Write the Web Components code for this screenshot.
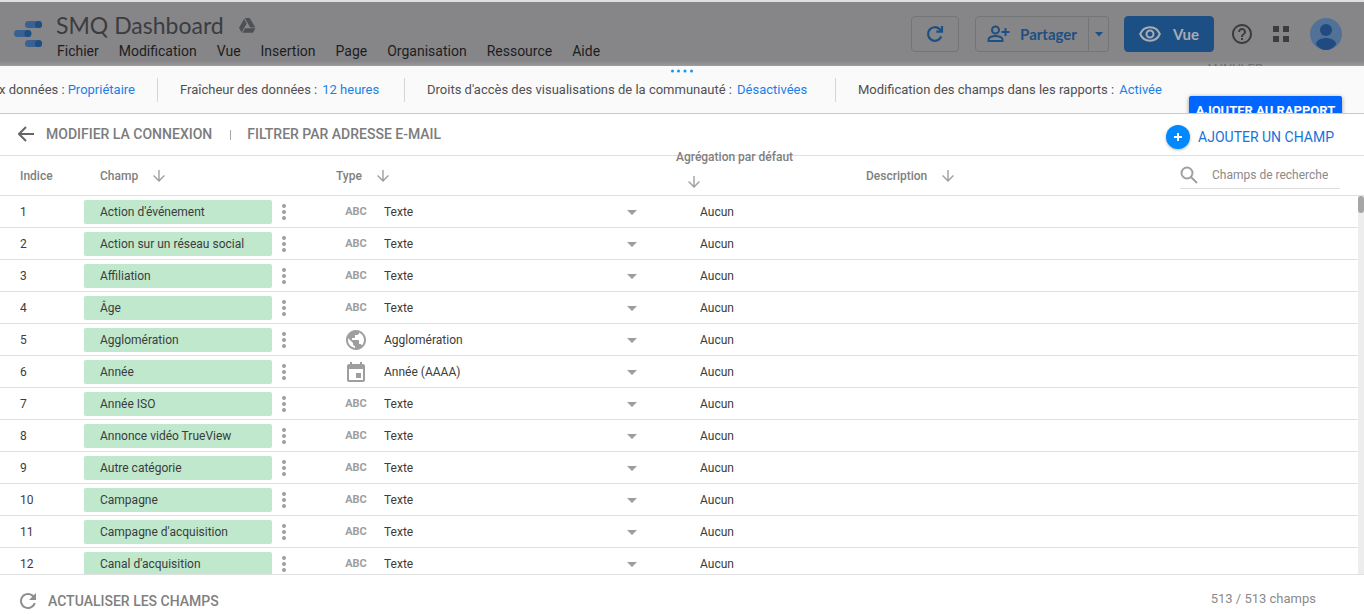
<!DOCTYPE html>
<html lang="fr">
<head>
<meta charset="utf-8">
<title>SMQ Dashboard</title>
<style>
html,body{margin:0;height:100%}
body{font-family:Roboto,"Liberation Sans",sans-serif;font-size:12px;color:#3c4043;background:#fff}
</style>
</head>
<body>
<studio-app></studio-app>

<template id="t-app">
<style>
:host{display:flex;flex-direction:column;height:100vh;overflow:hidden}
field-table{flex:1;min-height:0}
</style>
<top-bar></top-bar>
<source-bar></source-bar>
<panel-actions></panel-actions>
<field-table></field-table>
<panel-footer></panel-footer>
</template>

<template id="t-top">
<style>
:host{display:block;position:relative;flex:none;height:66px;box-sizing:border-box;overflow:hidden;background:#868688;border-top:2px solid #dcdfe3}
:host::after{content:"";position:absolute;left:0;right:0;bottom:0;height:5px;background:linear-gradient(#868688,#9c9c9c)}
.bar{display:flex;align-items:flex-start;height:64px;padding:0 22px 0 14px;box-sizing:border-box}
.logo{margin-top:19px;margin-right:13px}
.main{flex:1}
.title{display:flex;align-items:center;gap:15px;height:32px;margin-top:7px}
h1{margin:0;font:400 23px/32px Lato,sans-serif;color:#3b3c3f}
nav{display:flex;gap:20px;margin:2px 0 0 1px}
nav a{font-size:14px;line-height:16px;color:#1d1d1f;text-decoration:none}
.tools{display:flex;align-items:center;height:36px;margin-top:14px}
button{font:700 15px/34px Lato,sans-serif;display:flex;align-items:center;justify-content:center;height:36px;padding:0;margin:0;box-sizing:border-box;border:1px solid #747577;background:none;color:#1c4f84;border-radius:4px}
.re{width:48px;margin-right:16px}
.share{width:114px;gap:10px;border-radius:4px 0 0 4px}
.more{width:20px;border-left:0;border-radius:0 4px 4px 0;margin-right:15px}
.view{width:90px;gap:12px;background:#1c4f84;border-color:#1c4f84;color:#a9adb3;margin-right:18px}
.ico{border:0;background:none;color:#3b3c3f}
.help{margin-right:21px}
.apps{margin-right:21px}
.cancel{position:absolute;z-index:1;right:101px;top:60px;font-size:13px;line-height:13px;color:#717173}
</style>
<div class="bar">
<svg class="logo" width="29" height="27" viewBox="0 0 29 27"><g fill="#3a618f"><rect x="11" y="0" width="17" height="7" rx="3.500"/><rect x="0" y="9" width="17" height="7" rx="3.500"/><rect x="11" y="19" width="17" height="7" rx="3.500"/></g><g fill="#1c4f84"><circle cx="24.500" cy="3.500" r="3.500"/><circle cx="14" cy="12.500" r="3.500"/><circle cx="24.500" cy="22.500" r="3.500"/></g></svg>
<div class="main">
<div class="title"><h1>SMQ Dashboard</h1><svg width="17" height="15" viewBox="0 0 17 15" fill="#4f5053"><path d="M5.700 0h5l5.600 9.400h-5zM5 1l2.700 4.600L2.600 14.400 0 9.800zM6 10.300h10.500L14 14.800H3.500z"/></svg></div>
<nav><a href="#">Fichier</a><a href="#">Modification</a><a href="#">Vue</a><a href="#">Insertion</a><a href="#">Page</a><a href="#">Organisation</a><a href="#">Ressource</a><a href="#">Aide</a></nav>
</div>
<div class="tools">
<button class="re" aria-label="Actualiser"><svg width="18" height="18" viewBox="0 0 18 18" fill="none" stroke="#1c4f84" stroke-width="2.200"><path d="M15.200 11.500A6.800 6.800 0 1 1 13.500 4L16 6.500M16 1v5.700h-5.700"/></svg></button>
<button class="share"><svg width="23" height="18" viewBox="0 0 23 18" fill="none" stroke="#1c4f84" stroke-width="2"><circle cx="8.500" cy="5" r="3.500"/><path d="M1.500 16v-1.500c0-2.500 4.500-3.600 7-3.600s7 1.100 7 3.600V16zM18.500 3v8M14.500 7h8"/></svg>Partager</button>
<button class="more" aria-label="Plus d'options"><svg width="8" height="5" viewBox="0 0 8 5"><path d="M0 0h8L4 4.500z" fill="#1c4f84"/></svg></button>
<button class="view"><svg width="22" height="16" viewBox="0 0 22 16" fill="none" stroke="#a9adb3" stroke-width="2"><path d="M1.200 8C3 3.800 6.700 1.300 11 1.300S19 3.800 20.800 8C19 12.200 15.300 14.700 11 14.700S3 12.200 1.200 8z"/><circle cx="11" cy="8" r="3.500"/></svg>Vue</button>
<button class="ico help" aria-label="Aide"><svg width="20" height="20" viewBox="2 2 20 20" fill="#3b3c3f"><path d="M11 18h2v-2h-2v2zm1-16C6.480 2 2 6.480 2 12s4.480 10 10 10 10-4.480 10-10S17.520 2 12 2zm0 18c-4.410 0-8-3.590-8-8s3.590-8 8-8 8 3.590 8 8-3.590 8-8 8zm0-14c-2.210 0-4 1.790-4 4h2c0-1.100.9-2 2-2s2 .9 2 2c0 2-3 1.750-3 5h2c0-2.250 3-2.500 3-5 0-2.210-1.790-4-4-4z"/></svg></button>
<button class="ico apps" aria-label="Applications"><svg width="16" height="16" viewBox="0 0 16 16" fill="#3b3c3f"><path d="M0 0h6v6H0zM10 0h6v6h-6zM0 10h6v6H0zM10 10h6v6h-6z"/></svg></button>
<button class="ico" aria-label="Compte"><svg width="32" height="32" viewBox="0 0 32 32"><circle cx="16" cy="16" r="16" fill="#527199"/><circle cx="16" cy="12" r="6" fill="#204a80"/><path d="M6 26.500c0-4.500 6-6.500 10-6.500s10 2 10 6.500C23.500 30 20 32 16 32S8.500 30 6 26.500z" fill="#204a80"/></svg></button>
</div>
</div>
<span class="cancel">ANNULER</span>
</template>

<template id="t-source">
<style>
:host{display:flex;align-items:center;position:relative;flex:none;height:48px;box-sizing:border-box;overflow:hidden;background:#fafafa;border-bottom:1px solid #c9c9c9;font-size:13px;line-height:16px;color:#505052;white-space:nowrap}
div{height:24px;display:flex;align-items:center;gap:5px;padding:0 22px;border-right:1px solid #d6d6d6}
div:first-of-type{width:135px;padding-left:0;gap:3px;justify-content:flex-end}
.fresh{min-width:202px}
.rights{min-width:386px}
div:last-of-type{border:0}
a{color:#1a80e8;text-decoration:none}
.grip{position:absolute;left:50%;top:3px;transform:translateX(-11px)}
.add{position:absolute;right:22px;top:30px;width:153px;height:30px;padding:0;border:0;border-radius:2px;background:#0066ff;color:#fff;font:700 13px/30px Roboto,sans-serif;box-shadow:0 1px 4px rgba(0,0,0,.4)}
</style>
<svg class="grip" width="23" height="4" viewBox="0 0 23 4" fill="#1295f5"><circle cx="1.500" cy="2" r="1.500"/><circle cx="7.500" cy="2" r="1.500"/><circle cx="14" cy="2" r="1.500"/><circle cx="20.500" cy="2" r="1.500"/></svg>
<div><span>x données :</span><a href="#">Propriétaire</a></div>
<div class="fresh"><span>Fraîcheur des données :</span><a href="#">12 heures</a></div>
<div class="rights"><span>Droits d'accès des visualisations de la communauté :</span><a href="#">Désactivées</a></div>
<div><span>Modification des champs dans les rapports :</span><a href="#">Activée</a></div>
<button class="add">AJOUTER AU RAPPORT</button>
</template>

<template id="t-actions">
<style>
:host{display:flex;align-items:center;flex:none;height:42px;box-sizing:border-box;padding:0 30px 2px 18px;border-bottom:1px solid #e0e0e0}
button{font:500 14px/20px Roboto,sans-serif;border:0;background:none;padding:0;color:#7c7c7c;display:flex;align-items:center}
.back{gap:12px}
i{width:1px;height:10px;background:#a8a8a8;margin:2px 16px 0 18px}
.new{margin-left:auto;gap:8px;font-weight:400;color:#1a73d8;margin-top:6px}
b{display:flex;align-items:center;justify-content:center;width:24px;height:24px;border-radius:50%;background:#0088ff;box-shadow:0 1px 3px rgba(0,0,0,.3)}
</style>
<button class="back"><svg width="16" height="16" viewBox="0 0 16 16" fill="none" stroke="#666" stroke-width="2"><path d="M16 8H1.500M8 1L1 8l7 7"/></svg>MODIFIER LA CONNEXION</button><i></i><button>FILTRER PAR ADRESSE E-MAIL</button>
<button class="new"><b><svg width="8" height="8" viewBox="0 0 8 8"><path d="M4 0v8M0 4h8" stroke="#fff" stroke-width="2"/></svg></b>AJOUTER UN CHAMP</button>
</template>

<template id="t-table">
<style>
:host{display:block;position:relative}
table{width:100%;table-layout:fixed;border-collapse:separate;border-spacing:0}
th,td{padding:0;text-align:left;vertical-align:top;border-bottom:1px solid #e0e0e0;font-size:12px}
th{height:39px;font-weight:500;color:#808080}
td{height:31px;color:#3c3c3c}
.c1{width:84px}.c2{width:252px}.c3{width:340px}.c4{width:190px}
.h{display:flex;align-items:center;gap:15px;height:39px}
th:nth-child(2) .h{padding-left:16px}
.ix{padding-left:20px}
.two{flex-direction:column;align-items:flex-start;justify-content:center;gap:0;height:28px;line-height:24px;white-space:nowrap}
.two sort-arrow{flex:none;height:26px;display:flex;align-items:center;padding-left:12px}
.last{justify-content:space-between}
label{display:flex;align-items:center;gap:14px;width:160px;height:27px;margin:0 24px 0 0;border-bottom:1px solid #ddd;box-sizing:border-box}
input{flex:1;min-width:0;border:0;padding:0;outline:0;background:none;font:400 12px/16px Roboto,sans-serif;color:#666}
input::placeholder{color:#8a8a8a;opacity:1}
.f,.t,.n{display:flex;align-items:center;height:32px;margin-bottom:-1px}
.pill{width:188px;height:24px;box-sizing:border-box;padding-left:16px;border-radius:2px;background:#bfe8cc;line-height:24px}
.dots{margin-left:10px;width:4px;height:16px;border:0;background:none;padding:0;display:flex}
type-icon{width:24px;margin-left:8px}
select{appearance:none;border:0;background:none;padding:0;margin:0 3px 0 16px;width:240px;font:400 12px/16px Roboto,sans-serif;color:#3c3c3c}
.agg{padding-left:24px}
.track{position:absolute;right:0;top:40px;bottom:0;width:6px;background:#ededed}
.thumb{height:17px;border-radius:3px;background:#a6a6a6}
</style>
<table>
<colgroup><col class="c1"><col class="c2"><col class="c3"><col class="c4"><col></colgroup>
<thead><tr>
<th><div class="h ix">Indice</div></th>
<th><div class="h">Champ<sort-arrow></sort-arrow></div></th>
<th><div class="h">Type<sort-arrow></sort-arrow></div></th>
<th><div class="h two">Agrégation par défaut<sort-arrow></sort-arrow></div></th>
<th><div class="h last"><div class="h">Description<sort-arrow></sort-arrow></div>
<label><svg width="18" height="18" viewBox="0 0 18 18" fill="none" stroke="#a0a0a0" stroke-width="2"><circle cx="7" cy="7" r="5.500"/><path d="M11 11l6 6"/></svg><input type="search" placeholder="Champs de recherche" aria-label="Champs de recherche"></label></div></th>
</tr></thead>
<tbody></tbody>
</table>
<div class="track"><div class="thumb"></div></div>
</template>

<template id="t-arrow">
<style>:host{display:inline-flex}</style>
<svg width="12" height="12" viewBox="0 0 12 12" fill="none" stroke="#a0a0a0" stroke-width="1.400"><path d="M6 0v11M.6 5.600L6 11l5.400-5.400"/></svg>
</template>

<template id="t-footer">
<style>
:host{display:flex;align-items:center;justify-content:space-between;position:relative;z-index:1;flex:none;height:40px;box-sizing:border-box;border-top:1px solid #e0e0e0;padding:0 48px 0 20px;background:#fff}
button{display:flex;align-items:center;gap:12px;margin-top:12px;border:0;background:none;padding:0;font:500 14px/16px Roboto,sans-serif;color:#808080}
span{font-size:13px;color:#8a8a8a;margin-top:8px}
</style>
<button><svg width="16" height="16" viewBox="4 4 16 16" fill="#8f8f8f"><path d="M17.650 6.350C16.200 4.900 14.210 4 12 4c-4.420 0-7.990 3.580-7.990 8s3.570 8 7.990 8c3.730 0 6.840-2.550 7.730-6h-2.080c-.82 2.330-3.040 4-5.650 4-3.310 0-6-2.690-6-6s2.690-6 6-6c1.660 0 3.140.69 4.220 1.780L13 11h7V4l-2.350 2.350z"/></svg>ACTUALISER LES CHAMPS</button>
<span>513 / 513 champs</span>
</template>

<script>
function define(name, templateId, setup) {
  customElements.define(name, class extends HTMLElement {
    constructor() {
      super();
      this.attachShadow({mode: 'open'}).append(document.getElementById(templateId).content.cloneNode(true));
      if (setup) setup(this.shadowRoot);
    }
  });
}

customElements.define('type-icon', class extends HTMLElement {
  connectedCallback() {
    if (this.shadowRoot) return;
    const icons = {
      text: '<span>ABC</span>',
      geo: '<svg width="20" height="20" viewBox="2 2 20 20"><path d="M12 2C6.480 2 2 6.480 2 12s4.480 10 10 10 10-4.480 10-10S17.520 2 12 2zm-1 17.930c-3.950-.49-7-3.850-7-7.930 0-.62.080-1.210.21-1.790L9 15v1c0 1.100.9 2 2 2v1.930zm6.900-2.540c-.26-.81-1-1.390-1.900-1.390h-1v-3c0-.55-.45-1-1-1H8v-2h2c.55 0 1-.45 1-1V7h2c1.100 0 2-.9 2-2v-.41c2.930 1.190 5 4.060 5 7.410 0 2.080-.8 3.970-2.100 5.390z"/></svg>',
      date: '<svg width="18" height="20" viewBox="3 1 18 20"><path d="M17 12h-5v5h5v-5zM16 1v2H8V1H6v2H5c-1.110 0-1.990.9-1.990 2L3 19c0 1.100.89 2 2 2h14c1.100 0 2-.9 2-2V5c0-1.100-.9-2-2-2h-1V1h-2zm3 18H5V8h14v11z"/></svg>'
    };
    this.attachShadow({mode: 'open'}).innerHTML =
      '<style>:host{display:flex;justify-content:center;align-items:center}span{font:700 11px/16px Roboto,sans-serif;color:#9e9e9e}svg{fill:#9e9e9e}</style>' + icons[this.getAttribute('kind')];
  }
});

define('sort-arrow', 't-arrow');
define('top-bar', 't-top');
define('source-bar', 't-source');
define('panel-actions', 't-actions');
define('panel-footer', 't-footer');

const fields = [
  ["Action d'événement"], ["Action sur un réseau social"], ["Affiliation"], ["Âge"],
  ["Agglomération", "geo", "Agglomération"], ["Année", "date", "Année (AAAA)"],
  ["Année ISO"], ["Annonce vidéo TrueView"], ["Autre catégorie"], ["Campagne"],
  ["Campagne d'acquisition"], ["Canal d'acquisition"]
];
define('field-table', 't-table', root => {
  root.querySelector('tbody').innerHTML = fields.map(([name, kind = 'text', type = 'Texte'], i) => `<tr>
<td><div class="n ix">${i + 1}</div></td>
<td><div class="f"><div class="pill">${name}</div><button class="dots" aria-label="Options"><svg width="4" height="16" viewBox="0 0 4 16" fill="#9e9e9e"><circle cx="2" cy="2" r="2"/><circle cx="2" cy="8" r="2"/><circle cx="2" cy="14" r="2"/></svg></button></div></td>
<td><div class="t"><type-icon kind="${kind}"></type-icon><select aria-label="Type de ${name}"><option>${type}</option></select><svg width="10" height="5" viewBox="0 0 10 5"><path d="M0 0h10L5 5z" fill="#9e9e9e"/></svg></div></td>
<td><div class="n agg">Aucun</div></td><td></td></tr>`).join('');
});
define('studio-app', 't-app');
</script>
</body>
</html>
